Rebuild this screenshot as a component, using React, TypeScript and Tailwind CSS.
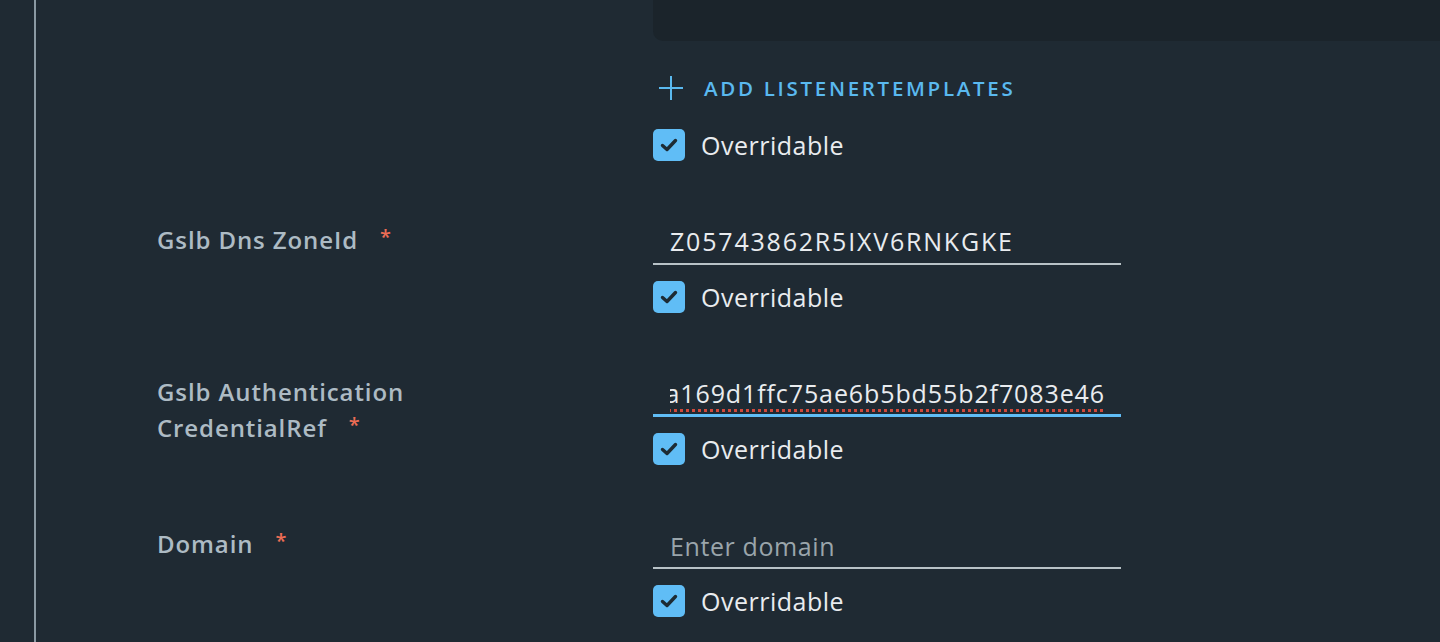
const font = { fontFamily: '"Open Sans", "Noto Sans", sans-serif' };

function Check() {
  return (
    <label className="flex items-center gap-4 h-8 cursor-pointer">
      <span className="w-8 h-8 rounded-[5px] bg-[#60bdf6] flex items-center justify-center">
        <svg width="20" height="20" viewBox="0 0 20 20" fill="none">
          <path d="M3.5 10.5 L8 14.5 L16.5 5.5" stroke="#1d2b34" strokeWidth="3.4" strokeLinecap="round" strokeLinejoin="round" />
        </svg>
      </span>
      <span className="text-[25px] leading-8 tracking-[0.5px] text-[#e9ecef]">Overridable</span>
    </label>
  );
}

function Label({ lines }: { lines: string[] }) {
  return (
    <div className="w-[617px] shrink-0 pl-[121px] pt-[1px] text-[24px] leading-[36px] font-semibold tracking-[0.9px] text-[#adbbc4]">
      {lines.map((l, i) => (
        <div key={i}>
          {l}
          {i === lines.length - 1 && (
            <span className="ml-[22px] text-[20px] leading-none align-[5px] text-[#ec6d55]">*</span>
          )}
        </div>
      ))}
    </div>
  );
}

function Row({ lines, children }: { lines: string[]; children: React.ReactNode }) {
  return (
    <div className="flex">
      <Label lines={lines} />
      <div className="flex flex-col gap-4">
        {children}
        <Check />
      </div>
    </div>
  );
}

export default function App() {
  return (
    <div className="w-[1440px] h-[642px] bg-[#1f2a33] overflow-hidden flex" style={font}>
      <div className="w-[34px] shrink-0" />
      <div className="w-[2px] shrink-0 bg-[#8a99a3]" />
      <div className="flex-1 flex flex-col gap-[60px]">
        {/* listener templates block */}
        <div className="flex">
          <div className="w-[617px] shrink-0" />
          <div className="flex-1 flex flex-col">
            <div className="h-[41px] bg-[#1b242b] rounded-bl-[10px]" />
            <button className="mt-[35px] flex items-center gap-[21px] pl-[6px] h-[24px] text-[#5ab9ef]">
              <svg width="24" height="24" viewBox="0 0 24 24" fill="none" stroke="currentColor" strokeWidth="2">
                <path d="M12 0 V24 M0 12 H24" />
              </svg>
              <span className="text-[20.5px] font-semibold tracking-[2.7px]">ADD LISTENERTEMPLATES</span>
            </button>
            <div className="mt-[29px]">
              <Check />
            </div>
          </div>
        </div>

        <Row lines={['Gslb Dns ZoneId']}>
          <div className="w-[468px] h-[44px] border-b-2 border-[#b8c2c7] px-[17px] flex items-center text-[25px] tracking-[1.8px] text-[#e9ecef]">
            Z05743862R5IXV6RNKGKE
          </div>
        </Row>

        <Row lines={['Gslb Authentication', 'CredentialRef']}>
          <div className="w-[468px] h-[44px] border-b-[3px] border-[#60bdf6] pl-[17px] pr-[16px] flex items-center text-[25px] tracking-[0.9px] text-[#e9ecef]">
            <div className="w-full overflow-hidden flex justify-end">
              <span className="whitespace-nowrap underline decoration-dotted decoration-[#d0493b] decoration-[3px] underline-offset-[6px]">
                0c2d9a169d1ffc75ae6b5bd55b2f7083e46
              </span>
            </div>
          </div>
        </Row>

        <Row lines={['Domain']}>
          <input
            placeholder="Enter domain"
            className="w-[468px] h-[44px] border-b-2 border-[#b8c2c7] px-[17px] bg-transparent outline-none text-[25px] tracking-[0.6px] text-[#e9ecef] placeholder:text-[#9aa5ab]"
          />
        </Row>
      </div>
    </div>
  );
}
